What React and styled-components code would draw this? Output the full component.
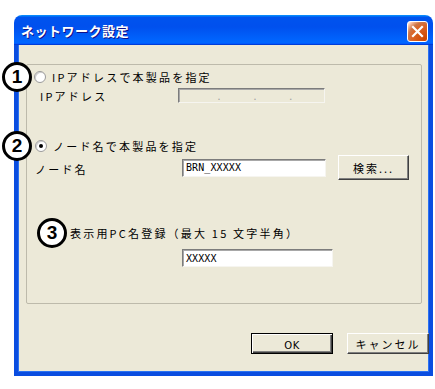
import React from 'react'
import styled, { createGlobalStyle, css } from 'styled-components'

const GlobalStyle = createGlobalStyle`
  html, body {
    margin: 0;
    background: #fff;
  }
  body {
    font-family: "Noto Sans CJK JP", "Liberation Sans", sans-serif;
    color: #000;
  }
`

const Page = styled.div`
  padding: 15px 0 0 14px;
`

const Window = styled.div`
  width: 419px;
  display: flex;
  flex-direction: column;
`

const TitleBar = styled.div`
  height: 30px;
  box-sizing: border-box;
  border-radius: 8px 8px 0 0;
  background: linear-gradient(
    180deg,
    #0997ff,
    #0053ee 8%,
    #0050ee 40%,
    #0066ff 88%,
    #0066ff 93%,
    #005bff 95%,
    #003dd7 96%,
    #003dd7
  );
  display: flex;
  align-items: center;
  justify-content: space-between;
  padding: 0 5px 0 7px;
`

const Title = styled.span`
  color: #fff;
  font-size: 13px;
  font-weight: bold;
  letter-spacing: 0.5px;
  text-shadow: 1px 1px #0f1089;
`

const CloseButton = styled.div`
  width: 21px;
  height: 21px;
  box-sizing: border-box;
  border: 1px solid #fff;
  border-radius: 3px;
  background: radial-gradient(circle at 90% 90%, #cc4600 0, #dc6527 55%, #cd7546 70%, #ffccb2 90%, #fff 100%);
  display: flex;
  align-items: center;
  justify-content: center;
  margin-top: 2px;
`

const Frame = styled.div`
  height: 331px;
  box-sizing: border-box;
  background: #ece9d8;
  border: 4px solid #0a4de0;
  border-top: none;
  box-shadow: inset 1px 0 #2b72f2, inset -1px 0 #2b72f2, inset 0 -1px #2b72f2;
  padding: 19px 0 0 8px;
  display: flex;
  flex-direction: column;
`

const GroupBox = styled.div`
  margin-right: 7px;
  border: 1px solid #bdbaab;
  border-radius: 2px;
  padding-bottom: 36px;
`

const Row = styled.div`
  position: relative;
  display: flex;
  align-items: center;
  height: ${p => p.$h}px;
  margin-top: ${p => p.$top}px;
  padding-left: ${p => p.$indent}px;
`

const Callout = styled.span`
  width: 30px;
  height: 30px;
  box-sizing: border-box;
  flex-shrink: 0;
  border: 3px solid #000;
  border-radius: 50%;
  background: #fff;
  display: flex;
  align-items: center;
  justify-content: center;
  font: bold 19px "Liberation Sans", sans-serif;
  ${p => p.$floating && css`
    position: absolute;
    left: -25px;
    top: ${p.$offset}px;
  `}
`

const Radio = styled.span`
  width: 12px;
  height: 12px;
  box-sizing: border-box;
  flex-shrink: 0;
  border-radius: 50%;
  border: 1px solid #9a9a9a;
  background: #fff;
  box-shadow: inset 1px 1px #d0d0d0;
  display: flex;
  align-items: center;
  justify-content: center;
  &::after {
    content: '';
    width: 4px;
    height: 4px;
    border-radius: 50%;
    background: ${p => (p.$checked ? '#000' : 'transparent')};
  }
`

const Label = styled.span`
  font-size: 11px;
  letter-spacing: 2.2px;
  white-space: nowrap;
  margin-left: ${p => p.$gap || 0}px;
`

const FieldLabel = styled.span`
  width: ${p => p.$w}px;
  flex-shrink: 0;
  font-size: 11px;
  letter-spacing: 2.2px;
  white-space: nowrap;
  align-self: ${p => (p.$low ? 'flex-end' : 'center')};
  padding-bottom: ${p => (p.$low ? 3 : 0)}px;
`

const TextBox = styled.div`
  width: ${p => p.$w}px;
  height: ${p => p.$h}px;
  box-sizing: border-box;
  flex-shrink: 0;
  border: 1px solid;
  border-color: #7c7c7c #f6f5f0 #f6f5f0 #7c7c7c;
  box-shadow: inset 1px 1px #a8a8a8;
  background: ${p => (p.$disabled ? '#ece9d8' : '#fff')};
  display: flex;
  align-items: center;
  padding-left: 3px;
  font: 10px "DejaVu Sans Mono", monospace;
  letter-spacing: 0.1px;
`

const IpDots = styled.div`
  flex: 1;
  display: flex;
  justify-content: space-evenly;
  padding: 3px 0 0 4px;
  color: #a0a0a0;
  font-size: 9px;
`

const Button = styled.button`
  width: ${p => p.$w}px;
  height: ${p => p.$h}px;
  margin-left: ${p => p.$gap || 0}px;
  flex-shrink: 0;
  padding: 0;
  background: #ece9d8;
  border: 1px solid;
  border-color: ${p => (p.$primary ? '#000' : '#fff #404040 #404040 #fff')};
  box-shadow: ${p => (p.$primary
    ? 'inset 1px 1px #fff, inset -1px -1px #404040, inset -2px -2px #808080'
    : 'inset -1px -1px #808080')};
  font-family: "Noto Sans CJK JP", sans-serif;
  font-size: 11px;
  letter-spacing: 2px;
  color: #000;
`

const OkText = styled.span`
  font: 10px "DejaVu Sans", sans-serif;
  letter-spacing: 0.5px;
`

const Footer = styled.div`
  display: flex;
  justify-content: flex-end;
  gap: 14px;
  margin-top: 29px;
`

const CloseIcon = () => (
  <svg width="13" height="13" viewBox="0 0 13 13">
    <path d="M2 2 L11 11 M11 2 L2 11" stroke="#fff" strokeWidth="2.2" strokeLinecap="square" />
  </svg>
)

const App = () => (
  <Page>
    <GlobalStyle />
    <Window>
      <TitleBar>
        <Title>ネットワーク設定</Title>
        <CloseButton>
          <CloseIcon />
        </CloseButton>
      </TitleBar>
      <Frame>
        <GroupBox>
          <Row $top={4} $h={16} $indent={7}>
            <Callout $floating $offset={-7}>1</Callout>
            <Radio />
            <Label $gap={6}>IPアドレスで本製品を指定</Label>
          </Row>
          <Row $top={3} $h={15} $indent={13}>
            <FieldLabel $w={138}>IPアドレス</FieldLabel>
            <TextBox $w={147} $h={15} $disabled>
              <IpDots>
                <span>.</span>
                <span>.</span>
                <span>.</span>
              </IpDots>
            </TextBox>
          </Row>
          <Row $top={35} $h={16} $indent={8}>
            <Callout $floating $offset={-7}>2</Callout>
            <Radio $checked />
            <Label $gap={6}>ノード名で本製品を指定</Label>
          </Row>
          <Row $top={1} $h={25} $indent={8}>
            <FieldLabel $w={147} $low>ノード名</FieldLabel>
            <TextBox $w={144} $h={18}>BRN_XXXXX</TextBox>
            <Button $w={71} $h={25} $gap={12}>検索...</Button>
          </Row>
          <Row $top={38} $h={30} $indent={10}>
            <Callout>3</Callout>
            <Label $gap={3}>表示用PC名登録（最大 15 文字半角）</Label>
          </Row>
          <Row $top={1} $h={18} $indent={155}>
            <TextBox $w={151} $h={18}>XXXXX</TextBox>
          </Row>
        </GroupBox>
        <Footer>
          <Button $w={82} $h={21} $primary>
            <OkText>OK</OkText>
          </Button>
          <Button $w={82} $h={21}>キャンセル</Button>
        </Footer>
      </Frame>
    </Window>
  </Page>
)

export default App
